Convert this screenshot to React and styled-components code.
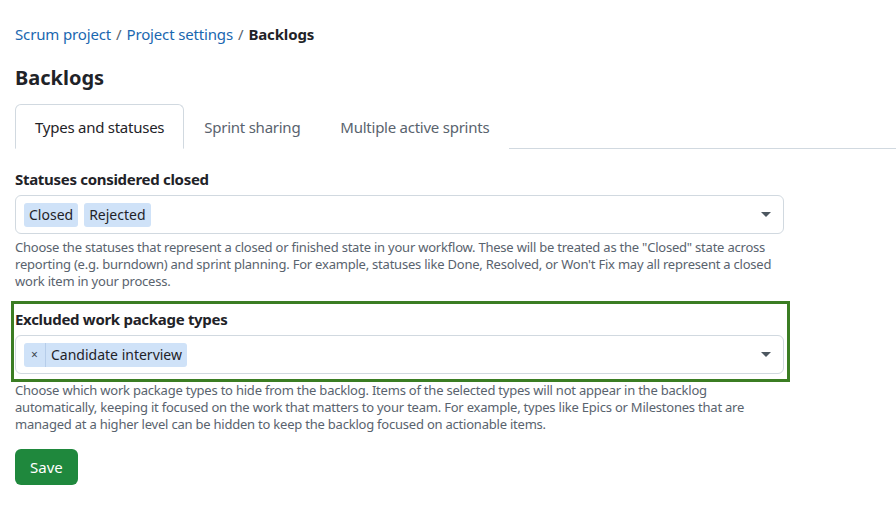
import React from "react";
import styled, { createGlobalStyle } from "styled-components";

const GlobalStyle = createGlobalStyle`
    body {
        margin: 0;
        background: #ffffff;
        font-family: "Noto Sans", "Open Sans", sans-serif;
        color: #1f2328;
    }
`;

const Page = styled.div`
    padding: 22px 0 0 15px;
`;

const Breadcrumb = styled.nav`
    display: flex;
    align-items: center;
    gap: 5px;
    font-size: 15px;
    line-height: 24px;
    letter-spacing: -0.15px;
`;

const Crumb = styled.a`
    color: ${(props) => (props.$current ? "#1f2328" : "#1a67b0")};
    font-weight: ${(props) => (props.$current ? 700 : 400)};
    text-decoration: none;
`;

const Separator = styled.span`
    color: #59636e;
`;

const Title = styled.h1`
    margin: 18px 0 12px;
    font-size: 20px;
    line-height: 28px;
    font-weight: 700;
`;

const TabBar = styled.div`
    display: flex;
    border-bottom: 1px solid #d1d9e0;
`;

const Tab = styled.button`
    font-family: inherit;
    font-size: 15px;
    letter-spacing: -0.25px;
    height: 45px;
    padding: 0 19px;
    margin-bottom: -1px;
    background: #ffffff;
    border: 1px solid ${(props) => (props.$active ? "#d1d9e0" : "transparent")};
    border-bottom-color: ${(props) => (props.$active ? "#ffffff" : "transparent")};
    border-radius: 6px 6px 0 0;
    color: ${(props) => (props.$active ? "#1f2328" : "#59636e")};
`;

const Form = styled.form`
    width: 769px;
    padding-top: 19px;
`;

const Field = styled.div`
    margin: ${(props) => (props.$highlight ? "0 -6px 0 -4px" : "0")};
    padding: ${(props) => (props.$highlight ? "4px 3px 5px 1px" : "0")};
    border: ${(props) => (props.$highlight ? "3px solid #3b7d23" : "none")};
`;

const Label = styled.label`
    display: block;
    font-size: 15px;
    letter-spacing: -0.3px;
    font-weight: 700;
    line-height: 22px;
    margin-bottom: 5px;
`;

const Select = styled.div`
    display: flex;
    align-items: center;
    height: 39px;
    box-sizing: border-box;
    padding: 0 12px 0 8px;
    border: 1px solid #d1d9e0;
    border-radius: 6px;
    gap: 6px;
`;

const Tag = styled.span`
    display: flex;
    align-items: stretch;
    height: 24px;
    background: #cfe2f8;
    border-radius: 3px;
    font-size: 14px;
    line-height: 24px;
    color: #1f2328;
`;

const TagText = styled.span`
    padding: 0 5px;
`;

const TagRemove = styled.span`
    width: 21px;
    text-align: center;
    font-size: 12px;
    color: #3d4650;
    border-right: 1px solid #b6cdea;
`;

const Caret = styled.span`
    margin-left: auto;
    width: 0;
    height: 0;
    border-left: 5px solid transparent;
    border-right: 5px solid transparent;
    border-top: 5px solid #4d5760;
`;

const Help = styled.p`
    width: 772px;
    margin: ${(props) => (props.$tight ? "0" : "5px 0 11px")};
    font-size: 13px;
    letter-spacing: -0.22px;
    line-height: 17px;
    color: #59636e;
`;

const SaveButton = styled.button`
    margin-top: 16px;
    font-family: inherit;
    font-size: 15px;
    color: #ffffff;
    background: #1f883d;
    border: none;
    border-radius: 6px;
    height: 36px;
    padding: 0 15px;
`;

export default function App() {
    return (
        <Page>
            <GlobalStyle />
            <Breadcrumb>
                <Crumb href="#">Scrum project</Crumb>
                <Separator>/</Separator>
                <Crumb href="#">Project settings</Crumb>
                <Separator>/</Separator>
                <Crumb $current>Backlogs</Crumb>
            </Breadcrumb>
            <Title>Backlogs</Title>
            <TabBar>
                <Tab $active>Types and statuses</Tab>
                <Tab>Sprint sharing</Tab>
                <Tab>Multiple active sprints</Tab>
            </TabBar>
            <Form>
                <Field>
                    <Label>Statuses considered closed</Label>
                    <Select>
                        <Tag><TagText>Closed</TagText></Tag>
                        <Tag><TagText>Rejected</TagText></Tag>
                        <Caret />
                    </Select>
                    <Help>
                        Choose the statuses that represent a closed or finished state in your workflow. These will be treated as the "Closed" state across reporting (e.g. burndown) and sprint planning. For example, statuses like Done, Resolved, or Won't Fix may all represent a closed work item in your process.
                    </Help>
                </Field>
                <Field $highlight>
                    <Label>Excluded work package types</Label>
                    <Select>
                        <Tag>
                            <TagRemove>×</TagRemove>
                            <TagText>Candidate interview</TagText>
                        </Tag>
                        <Caret />
                    </Select>
                </Field>
                <Help $tight>
                    Choose which work package types to hide from the backlog. Items of the selected types will not appear in the backlog automatically, keeping it focused on the work that matters to your team. For example, types like Epics or Milestones that are managed at a higher level can be hidden to keep the backlog focused on actionable items.
                </Help>
                <SaveButton type="button">Save</SaveButton>
            </Form>
        </Page>
    );
}
